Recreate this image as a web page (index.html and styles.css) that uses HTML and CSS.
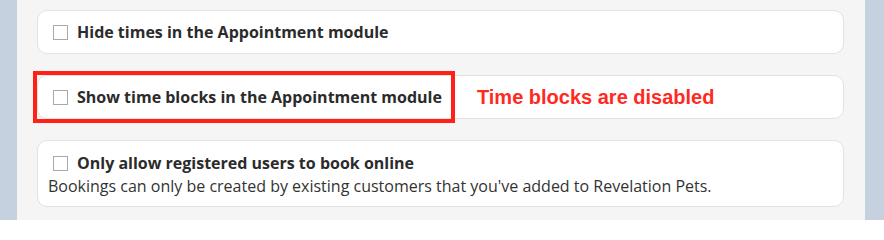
FILE: index.html
```html
<!DOCTYPE html>
<html>
<head>
<meta charset="utf-8">
<link rel="stylesheet" href="styles.css">
</head>
<body>
<div class="page">
  <div class="side side-left"></div>
  <main class="main">
    <div class="card">
      <label class="opt"><span class="box"></span><span class="opt-label">Hide times in the Appointment module</span></label>
    </div>
    <div class="card card-flag">
      <label class="opt"><span class="box"></span><span class="opt-label">Show time blocks in the Appointment module</span></label>
      <span class="note">Time blocks are disabled</span>
      <span class="highlight"></span>
    </div>
    <div class="card card-desc">
      <label class="opt"><span class="box"></span><span class="opt-label">Only allow registered users to book online</span></label>
      <p class="desc">Bookings can only be created by existing customers that you've added to Revelation Pets.</p>
    </div>
  </main>
  <div class="side side-right"></div>
</div>
</body>
</html>
```
FILE: styles.css
```css
html, body {
  margin: 0;
  padding: 0;
}
body {
  width: 884px;
  height: 220px;
  overflow: hidden;
  font-family: "Open Sans", "Noto Sans", sans-serif;
  color: #333;
}
.page {
  display: flex;
  height: 220px;
  background: #f5f5f5;
}
.side {
  background: #c5d1de;
  flex: none;
}
.side-left { width: 17px; }
.side-right { width: 19px; }
.main {
  flex: 1;
  padding: 10px 21px 0 20px;
  display: flex;
  flex-direction: column;
  gap: 21px;
}
.card {
  position: relative;
  background: #fff;
  border: 1px solid #e2e2e2;
  border-radius: 10px;
  padding: 11px 10px;
  display: flex;
  align-items: center;
}
.opt {
  display: flex;
  align-items: center;
  font-size: 16px;
  line-height: 20px;
  font-weight: 700;
  color: #2b2b2b;
}
.box {
  width: 13px;
  height: 13px;
  border: 1px solid #a9a9a9;
  background: #fff;
  margin: 0 9px 0 5px;
  flex: none;
}
.note {
  margin-left: 35px;
  font-family: "Liberation Sans", Arial, sans-serif;
  font-weight: 700;
  font-size: 20px;
  line-height: 20px;
  color: #ff2a1f;
}
.highlight {
  position: absolute;
  left: -5px;
  top: -5px;
  width: 414px;
  height: 44px;
  border: 4px solid #ff2116;
  pointer-events: none;
}
.card-desc {
  flex-direction: column;
  align-items: flex-start;
  padding: 12px 10px 10px 10px;
}
.desc {
  margin: 3px 0 0 0;
  font-size: 16px;
  line-height: 20px;
  color: #333;
}
```
